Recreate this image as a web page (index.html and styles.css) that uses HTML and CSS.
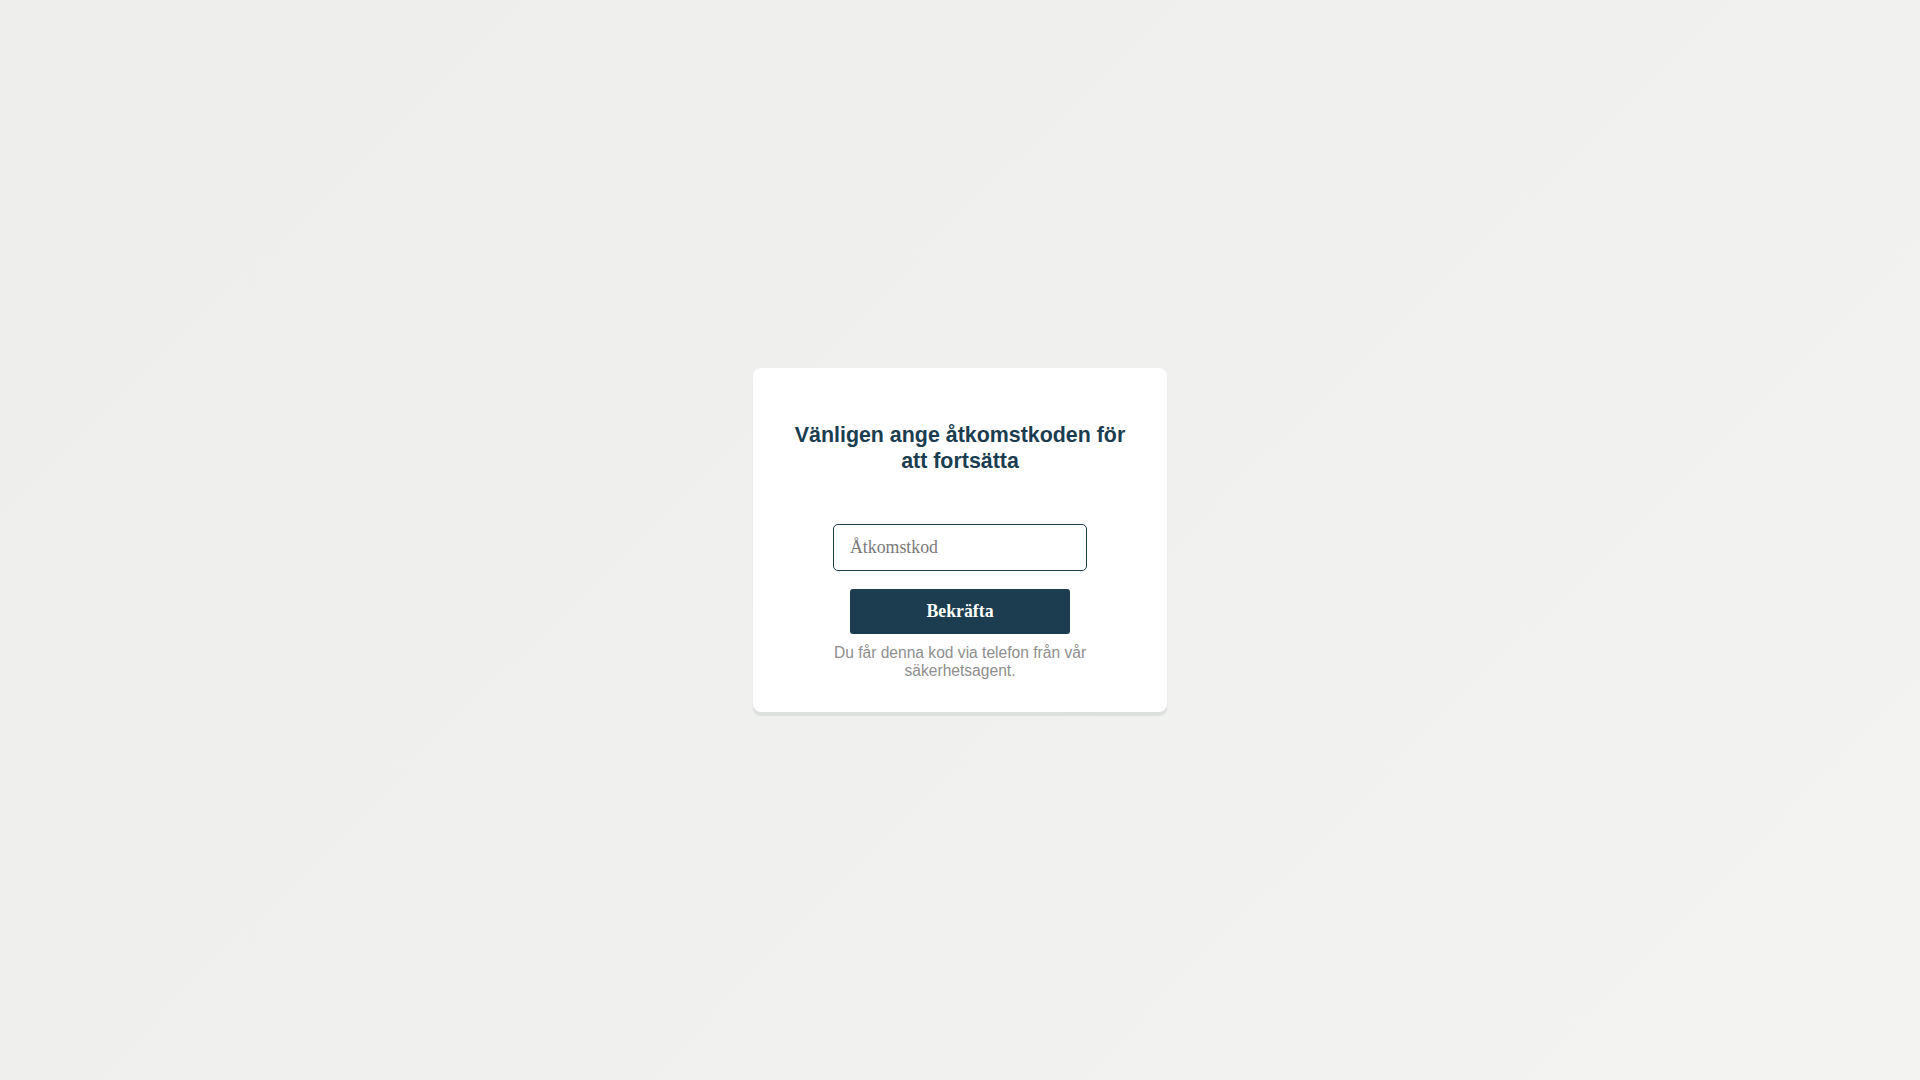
FILE: index.html
```html
<!DOCTYPE html>
<html lang="sv">
<head>
<meta charset="utf-8">
<title>Åtkomstkod</title>
<link rel="stylesheet" href="styles.css">
</head>
<body>
<main class="page">
  <form class="card" onsubmit="return false;">
    <h1 class="title">Vänligen ange åtkomstkoden för att fortsätta</h1>
    <input class="code-input" type="text" placeholder="Åtkomstkod">
    <button class="confirm" type="submit">Bekräfta</button>
    <p class="hint">Du får denna kod via telefon från vår säkerhetsagent.</p>
  </form>
</main>
</body>
</html>
```
FILE: styles.css
```css
html, body {
  margin: 0;
  padding: 0;
}
body {
  background: linear-gradient(135deg, #eeeeec 0%, #f0f0ee 50%, #f3f3f2 100%);
  font-family: "Liberation Serif", "Times New Roman", serif;
  min-height: 100vh;
}
.page {
  min-height: 100vh;
  display: flex;
  align-items: center;
  justify-content: center;
}
.card {
  width: 414px;
  box-sizing: border-box;
  padding: 54px 34px 32px;
  background: #ffffff;
  border-radius: 8px;
  box-shadow: 0 4px 1px rgba(200, 208, 208, 0.5);
  display: flex;
  flex-direction: column;
  align-items: center;
}
.title {
  margin: 0 0 50px;
  font-family: "Liberation Sans", Arial, sans-serif;
  font-weight: bold;
  font-size: 21.4px;
  line-height: 26px;
  color: #1b3d4f;
  text-align: center;
}
.code-input {
  width: 254px;
  height: 47px;
  box-sizing: border-box;
  margin: 0 0 18px;
  padding: 0 16px;
  border: 1px solid #1b3d4f;
  border-radius: 5px;
  font-family: "Liberation Serif", "Times New Roman", serif;
  font-size: 17.8px;
  color: #222;
  background: #fff;
  outline: none;
}
.code-input::placeholder {
  color: #7a7a7a;
}
.confirm {
  width: 220px;
  height: 45px;
  margin: 0 0 10px;
  border: none;
  border-radius: 3px;
  background: #1b3d4f;
  color: #ffffff;
  font-family: "Liberation Serif", "Times New Roman", serif;
  font-weight: bold;
  font-size: 17.8px;
  cursor: pointer;
}
.hint {
  margin: 0;
  font-family: "Liberation Sans", Arial, sans-serif;
  font-size: 15.6px;
  line-height: 18px;
  color: #8e8e8e;
  text-align: center;
  max-width: 260px;
}
```
